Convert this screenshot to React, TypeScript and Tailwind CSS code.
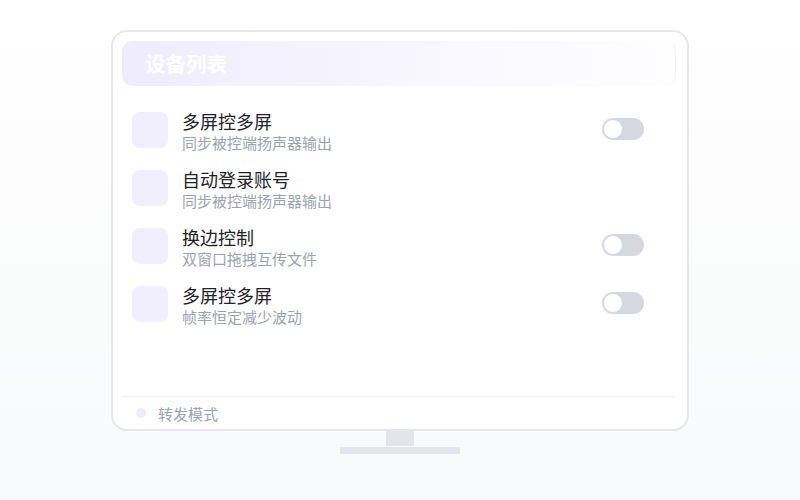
const rows = [
  { title: "多屏控多屏", desc: "同步被控端扬声器输出", toggle: true },
  { title: "自动登录账号", desc: "同步被控端扬声器输出", toggle: false },
  { title: "换边控制", desc: "双窗口拖拽互传文件", toggle: true },
  { title: "多屏控多屏", desc: "帧率恒定减少波动", toggle: true },
];

function Toggle() {
  return (
    <div className="mt-[9px] h-[22px] w-[42px] rounded-full bg-[#d5d8df] p-[1px]">
      <div className="h-[20px] w-[20px] rounded-full border border-[#d5d8df] bg-white" />
    </div>
  );
}

export default function App() {
  return (
    <div
      className="flex h-[500px] w-[800px] flex-col items-center bg-gradient-to-b from-white to-[#f8f9fa] pt-[30px]"
      style={{ fontFamily: '"Noto Sans CJK SC", "Noto Sans", sans-serif' }}
    >
      {/* screen */}
      <div className="flex h-[401px] w-[578px] flex-col rounded-[16px] border-2 border-[#e5e7eb] bg-white px-[9px] pt-[9px]">
        <div className="mr-[2px] flex h-[45px] items-center rounded-[10px] border-r border-[#f1f1f6] bg-gradient-to-r from-[#eeecfd] via-[#f7f6fe] to-[#fefeff] pl-[23px]">
          <span className="text-[20.5px] font-bold leading-none text-white">设备列表</span>
        </div>

        <div className="mt-[23px] flex flex-col gap-[14px] pl-[10px] pr-[34px]">
          {rows.map((r, i) => (
            <div key={i} className="flex items-start">
              <div className="mt-[3px] h-[36px] w-[36px] shrink-0 rounded-[8px] bg-[#f1eefd]" />
              <div className="ml-[14px] flex flex-1 flex-col">
                <span className="text-[18px] leading-[24px] text-[#1f2329]">{r.title}</span>
                <span className="text-[15px] leading-[20px] text-[#9ca3af]">{r.desc}</span>
              </div>
              {r.toggle && <Toggle />}
            </div>
          ))}
        </div>

        <div className="flex-1" />
        <div className="mr-[2px] h-px bg-[#eef0f3]" />
        <div className="flex h-[32px] items-center pl-[14px]">
          <div className="h-[10px] w-[10px] rounded-full bg-[#efebfd]" />
          <span className="ml-[12px] text-[15px] leading-none text-[#9ca3af]">转发模式</span>
        </div>
      </div>

      {/* stand */}
      <div className="h-[15px] w-[28px] bg-[#e2e5e9]" />
      <div className="mt-[1px] h-[7px] w-[120px] bg-[#e2e5e9]" />
    </div>
  );
}
